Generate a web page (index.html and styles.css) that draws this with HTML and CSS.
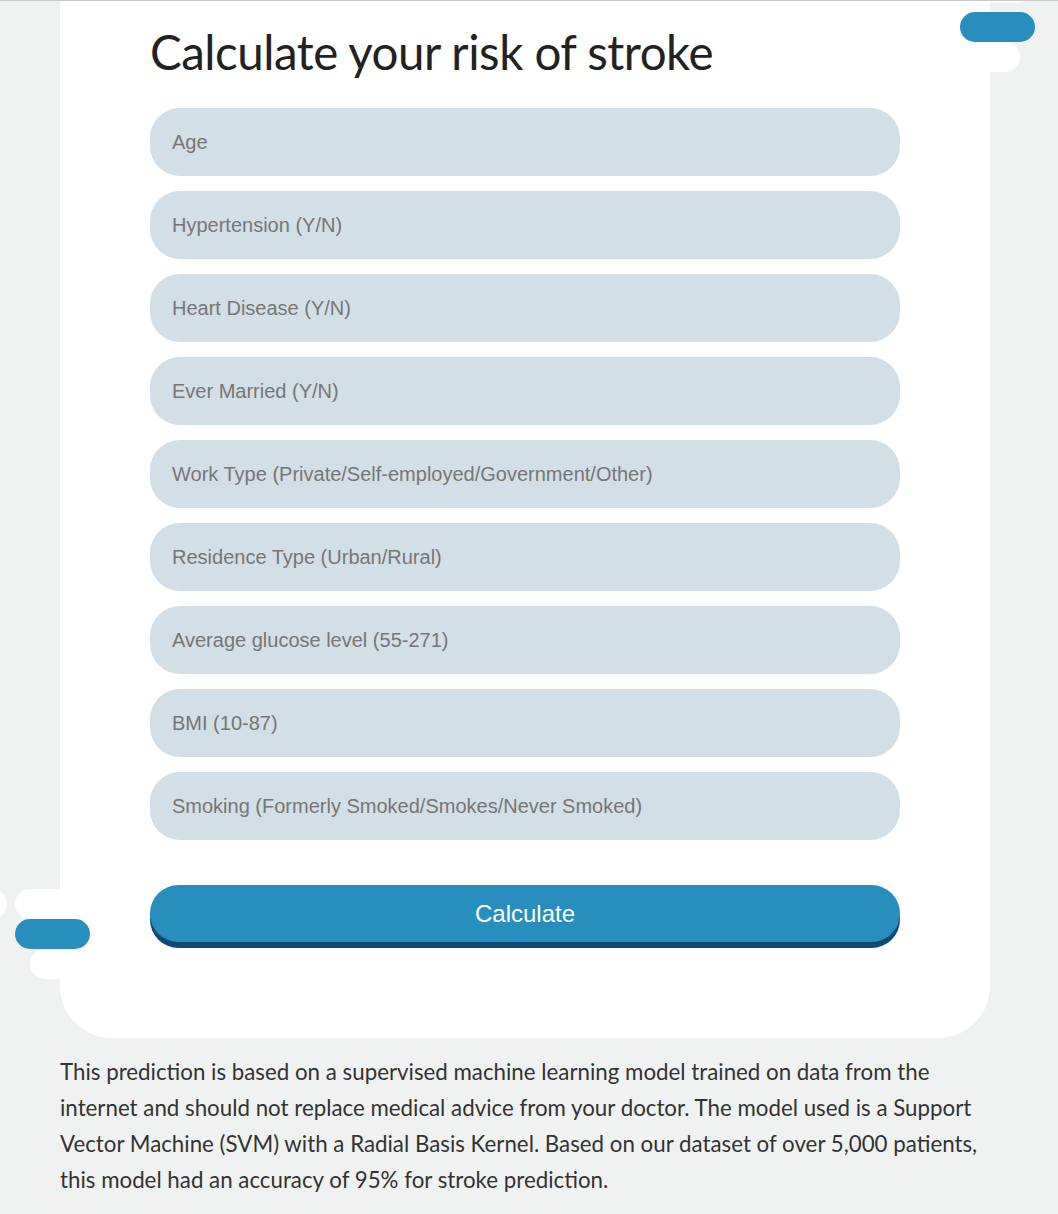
FILE: index.html
```html
<!DOCTYPE html>
<html lang="en">
<head>
<meta charset="utf-8">
<title>Stroke risk calculator</title>
<link rel="stylesheet" href="styles.css">
</head>
<body>
<div class="topline"></div>
<div class="page">
  <span class="deco deco-top-white"></span>
  <span class="deco deco-top-blue"></span>
  <span class="deco deco-right-white"></span>
  <span class="deco deco-left-dot"></span>
  <span class="deco deco-left-white1"></span>
  <span class="deco deco-left-blue"></span>
  <span class="deco deco-left-white2"></span>
  <main class="card">
    <h1 class="title">Calculate your risk of stroke</h1>
    <form class="form">
      <input class="field" type="text" placeholder="Age">
      <input class="field" type="text" placeholder="Hypertension (Y/N)">
      <input class="field" type="text" placeholder="Heart Disease (Y/N)">
      <input class="field" type="text" placeholder="Ever Married (Y/N)">
      <input class="field" type="text" placeholder="Work Type (Private/Self-employed/Government/Other)">
      <input class="field" type="text" placeholder="Residence Type (Urban/Rural)">
      <input class="field" type="text" placeholder="Average glucose level (55-271)">
      <input class="field" type="text" placeholder="BMI (10-87)">
      <input class="field" type="text" placeholder="Smoking (Formerly Smoked/Smokes/Never Smoked)">
      <button class="submit" type="button">Calculate</button>
    </form>
  </main>
  <p class="note">This prediction is based on a supervised machine learning model trained on data from the<br>internet and should not replace medical advice from your doctor. The model used is a Support<br>Vector Machine (SVM) with a Radial Basis Kernel. Based on our dataset of over 5,000 patients,<br>this model had an accuracy of 95% for stroke prediction.</p>
</div>
</body>
</html>
```
FILE: styles.css
```css
* { box-sizing: border-box; }
html, body { margin: 0; padding: 0; }
body {
  background: #f0f2f1;
  font-family: "Liberation Sans", Arial, sans-serif;
  overflow: hidden;
}
.topline {
  height: 1px;
  background: #c9c9c9;
  position: relative;
  z-index: 5;
}
.page {
  position: relative;
  margin-top: -1px;
}
.card {
  position: relative;
  z-index: 2;
  margin-left: 60px;
  width: 930px;
  height: 1038px;
  background: #ffffff;
  border-radius: 0 0 52px 52px;
  padding: 22px 0 0 90px;
}
.title {
  margin: 0 0 26px;
  font-family: "Lato", "Open Sans", sans-serif;
  font-weight: 400;
  font-size: 47.5px;
  line-height: 60px;
  letter-spacing: -0.5px;
  color: #222222;
}
.form {
  display: flex;
  flex-direction: column;
  gap: 15px;
  width: 750px;
}
.field {
  display: block;
  width: 750px;
  height: 68px;
  border: none;
  outline: none;
  border-radius: 30px;
  background: #d2dfe7;
  padding: 0 22px;
  font-family: "Liberation Sans", Arial, sans-serif;
  font-size: 20px;
  color: #333;
}
.field::placeholder { color: #767676; opacity: 1; }
.submit {
  margin-top: 30px;
  height: 57px;
  width: 750px;
  border: none;
  border-radius: 30px;
  background: #288ebe;
  box-shadow: 0 6px 0 #0f4978;
  color: #ffffff;
  font-family: "Liberation Sans", Arial, sans-serif;
  font-size: 24px;
  padding: 0;
}
.note {
  margin: 16px 0 0 60px;
  font-family: "Lato", "Open Sans", sans-serif;
  font-size: 22.3px;
  line-height: 36px;
  color: #333333;
  white-space: nowrap;
}
.deco {
  position: absolute;
  display: block;
  height: 30px;
  border-radius: 15px;
  background: #ffffff;
  z-index: 1;
}
.deco-top-white { top: -27px; left: 900px; width: 134px; }
.deco-top-blue { top: 12px; left: 960px; width: 75px; background: #288ebe; z-index: 3; }
.deco-right-white { top: 42px; left: 900px; width: 120px; }
.deco-left-dot { top: 889px; left: -30px; width: 37px; }
.deco-left-white1 { top: 889px; left: 15px; width: 100px; }
.deco-left-blue { top: 919px; left: 15px; width: 75px; background: #288ebe; z-index: 3; }
.deco-left-white2 { top: 949px; left: 30px; width: 100px; }
```
